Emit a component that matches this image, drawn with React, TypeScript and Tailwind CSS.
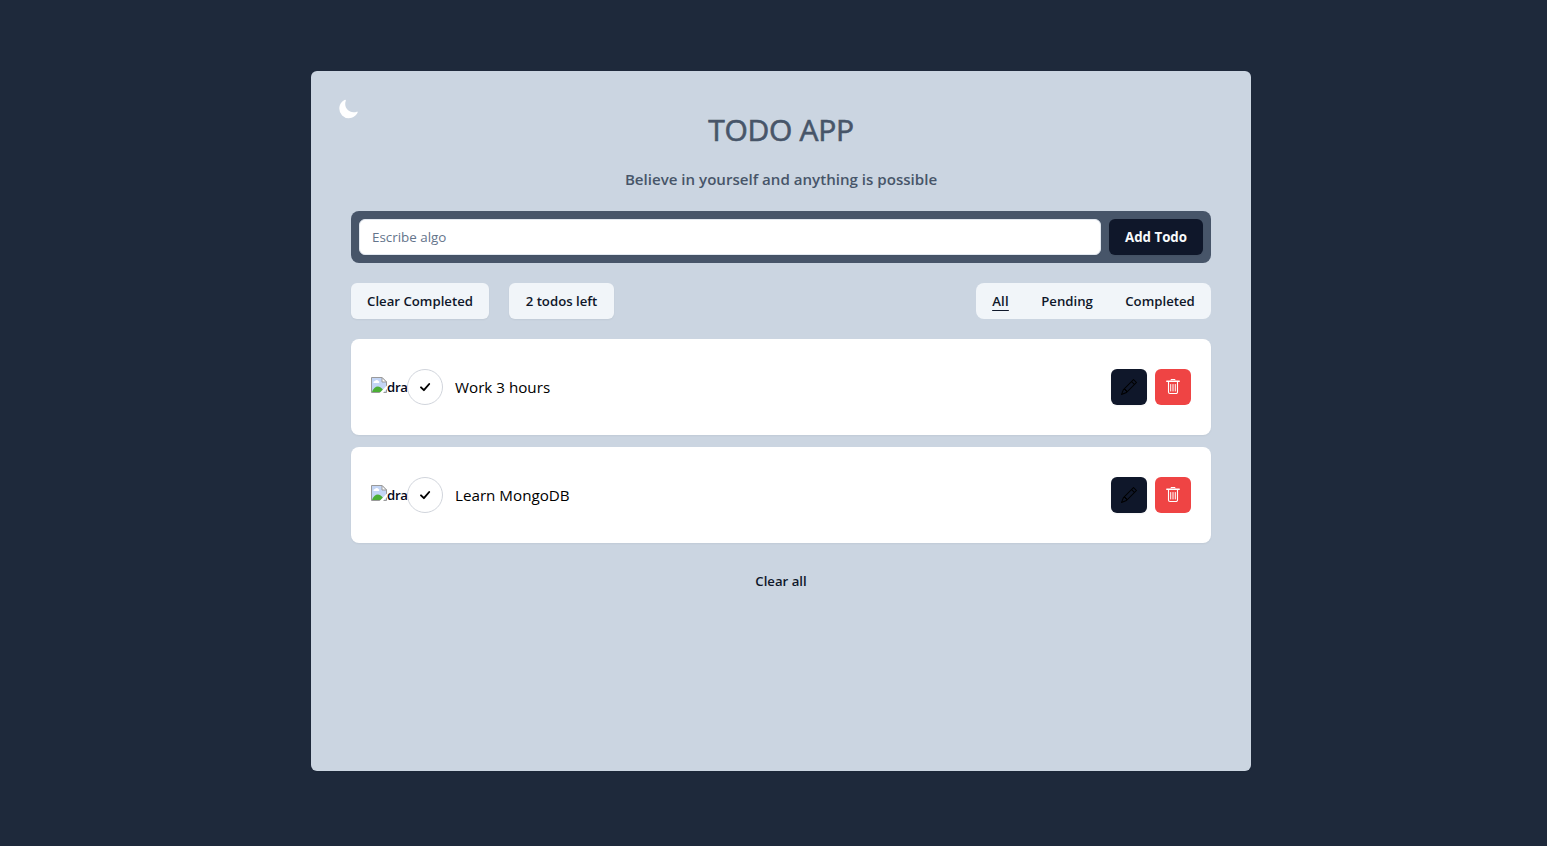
import React from "react";
import { IoMoon } from "react-icons/io5";
import { BsPencil } from "react-icons/bs";

function BrokenImage() {
  return (
    <svg width="16" height="16" viewBox="0 0 16 16" className="shrink-0">
      <path d="M.5.5h10.500l4.500 4.500v10.500H.5z" fill="#c3d5f5" />
      <path d="M2.500 6a1.500 1.500 0 0 1 1.500-2 2 2 0 0 1 3.500 0A1.300 1.300 0 0 1 8 6z" fill="#fff" />
      <path d="M1 15c1-3.500 3.500-5.500 6-5.500S12 12 13.500 15z" fill="#4caf35" />
      <path d="M.5.5h10.500l4.500 4.500v10.500H.5z" fill="none" stroke="#9a9a9a" />
      <path d="M11 .5V5h4.500z" fill="#fff" stroke="#9a9a9a" />
      <path d="M8 16.500 16.500 8v3.500l-5 5z" fill="#fff" />
    </svg>
  );
}

function CheckIcon() {
  return (
    <svg width="12" height="12" viewBox="0 0 12 12" fill="none" stroke="currentColor" strokeWidth="1.900" strokeLinecap="round" strokeLinejoin="round">
      <path d="M2 6.300 4.900 9.200 10.200 3" />
    </svg>
  );
}

function TrashIcon() {
  return (
    <svg width="16" height="16" viewBox="0 0 16 16" fill="none" stroke="currentColor" strokeLinecap="round">
      <path d="M6 1V.5h4V1" />
      <path d="M1.800 2.300h12.400" strokeWidth="1.500" />
      <path d="M3.500 3v10a1.500 1.500 0 0 0 1.500 1.500h6a1.500 1.500 0 0 0 1.500-1.500V3" strokeWidth="1.100" />
      <path d="M5.700 5.500v6.500M8 5.500v6.500M10.300 5.500v6.500" />
    </svg>
  );
}

function Todo({ text }: { text: string }) {
  return (
    <li className="flex h-24 items-center rounded-lg bg-white px-5 shadow-xs">
      <div className="flex w-9 items-center overflow-visible text-[13.2px] font-semibold text-slate-950">
        <div className="flex w-[37px] shrink-0 items-center overflow-hidden">
          <div className="-mt-0.5 mb-0.5"><BrokenImage /></div>
          <span className="pt-0.5 tracking-[-0.3px]">dra</span>
        </div>
      </div>
      <button className="flex size-9 items-center justify-center rounded-full border border-gray-300 bg-white text-black">
        <CheckIcon />
      </button>
      <p className="ml-3 flex-1 text-[15.200px] text-black">{text}</p>
      <div className="flex gap-2">
        <button className="flex size-9 items-center justify-center rounded-md bg-[#0f172a] text-black shadow-xs">
          <BsPencil size={16} />
        </button>
        <button className="flex size-9 items-center justify-center rounded-md bg-[#ef4444] text-white">
          <TrashIcon />
        </button>
      </div>
    </li>
  );
}

export default function App() {
  return (
    <div className="flex h-[846px] justify-center bg-[#1e293b] pt-[71px] pl-[15px] font-['Open_Sans',sans-serif]">
      <main className="flex h-[700px] w-[940px] flex-col rounded-md bg-[#cbd5e1] px-10 shadow-xs">
        <div className="-ml-[13px] h-[42px] pt-[27px] text-white">
          <IoMoon className="h-[22px] w-[21px]" />
        </div>
        <h1 className="-mt-px text-center text-[30px] leading-9 font-medium tracking-[-0.3px] text-[#475569] [-webkit-text-stroke:0.6px_#475569]">TODO APP</h1>
        <p className="mt-[19px] text-center text-[15.100px] leading-6 font-semibold text-[#475569]">
          Believe in yourself and anything is possible
        </p>
        <form className="mt-5 flex gap-2 rounded-lg bg-[#475569] p-2">
          <input
            placeholder="Escribe algo"
            className="h-9 min-w-0 flex-1 rounded-md border border-[#e2e8f0] bg-white px-3 text-[13.400px] shadow-xs placeholder:text-[#64748b]"
          />
          <button type="button" className="h-9 w-[94px] rounded-md bg-[#0f172a] pt-px text-[13.300px] font-bold whitespace-nowrap text-[#f8fafc] shadow-xs">
            Add Todo
          </button>
        </form>
        <div className="mt-5 flex h-9 gap-5 text-[13.200px] font-semibold whitespace-nowrap text-[#0f172a]">
          <button className="w-[138px] rounded-md bg-[#f1f5f9] pt-px shadow-xs">Clear Completed</button>
          <button className="w-[105px] rounded-md bg-[#f1f5f9] pt-px shadow-xs">2 todos left</button>
          <nav className="ml-auto flex w-[235px] rounded-lg bg-[#f1f5f9] pt-px">
            <button className="w-[49px] tracking-[0.2px] underline underline-offset-4">All</button>
            <button className="w-[84px]">Pending</button>
            <button className="w-[102px]">Completed</button>
          </nav>
        </div>
        <ul className="mt-5 flex flex-col gap-3">
          <Todo text="Work 3 hours" />
          <Todo text="Learn MongoDB" />
        </ul>
        <button className="mt-5 h-9 self-center pt-px text-[13.200px] font-semibold text-[#0f172a]">Clear all</button>
      </main>
    </div>
  );
}
